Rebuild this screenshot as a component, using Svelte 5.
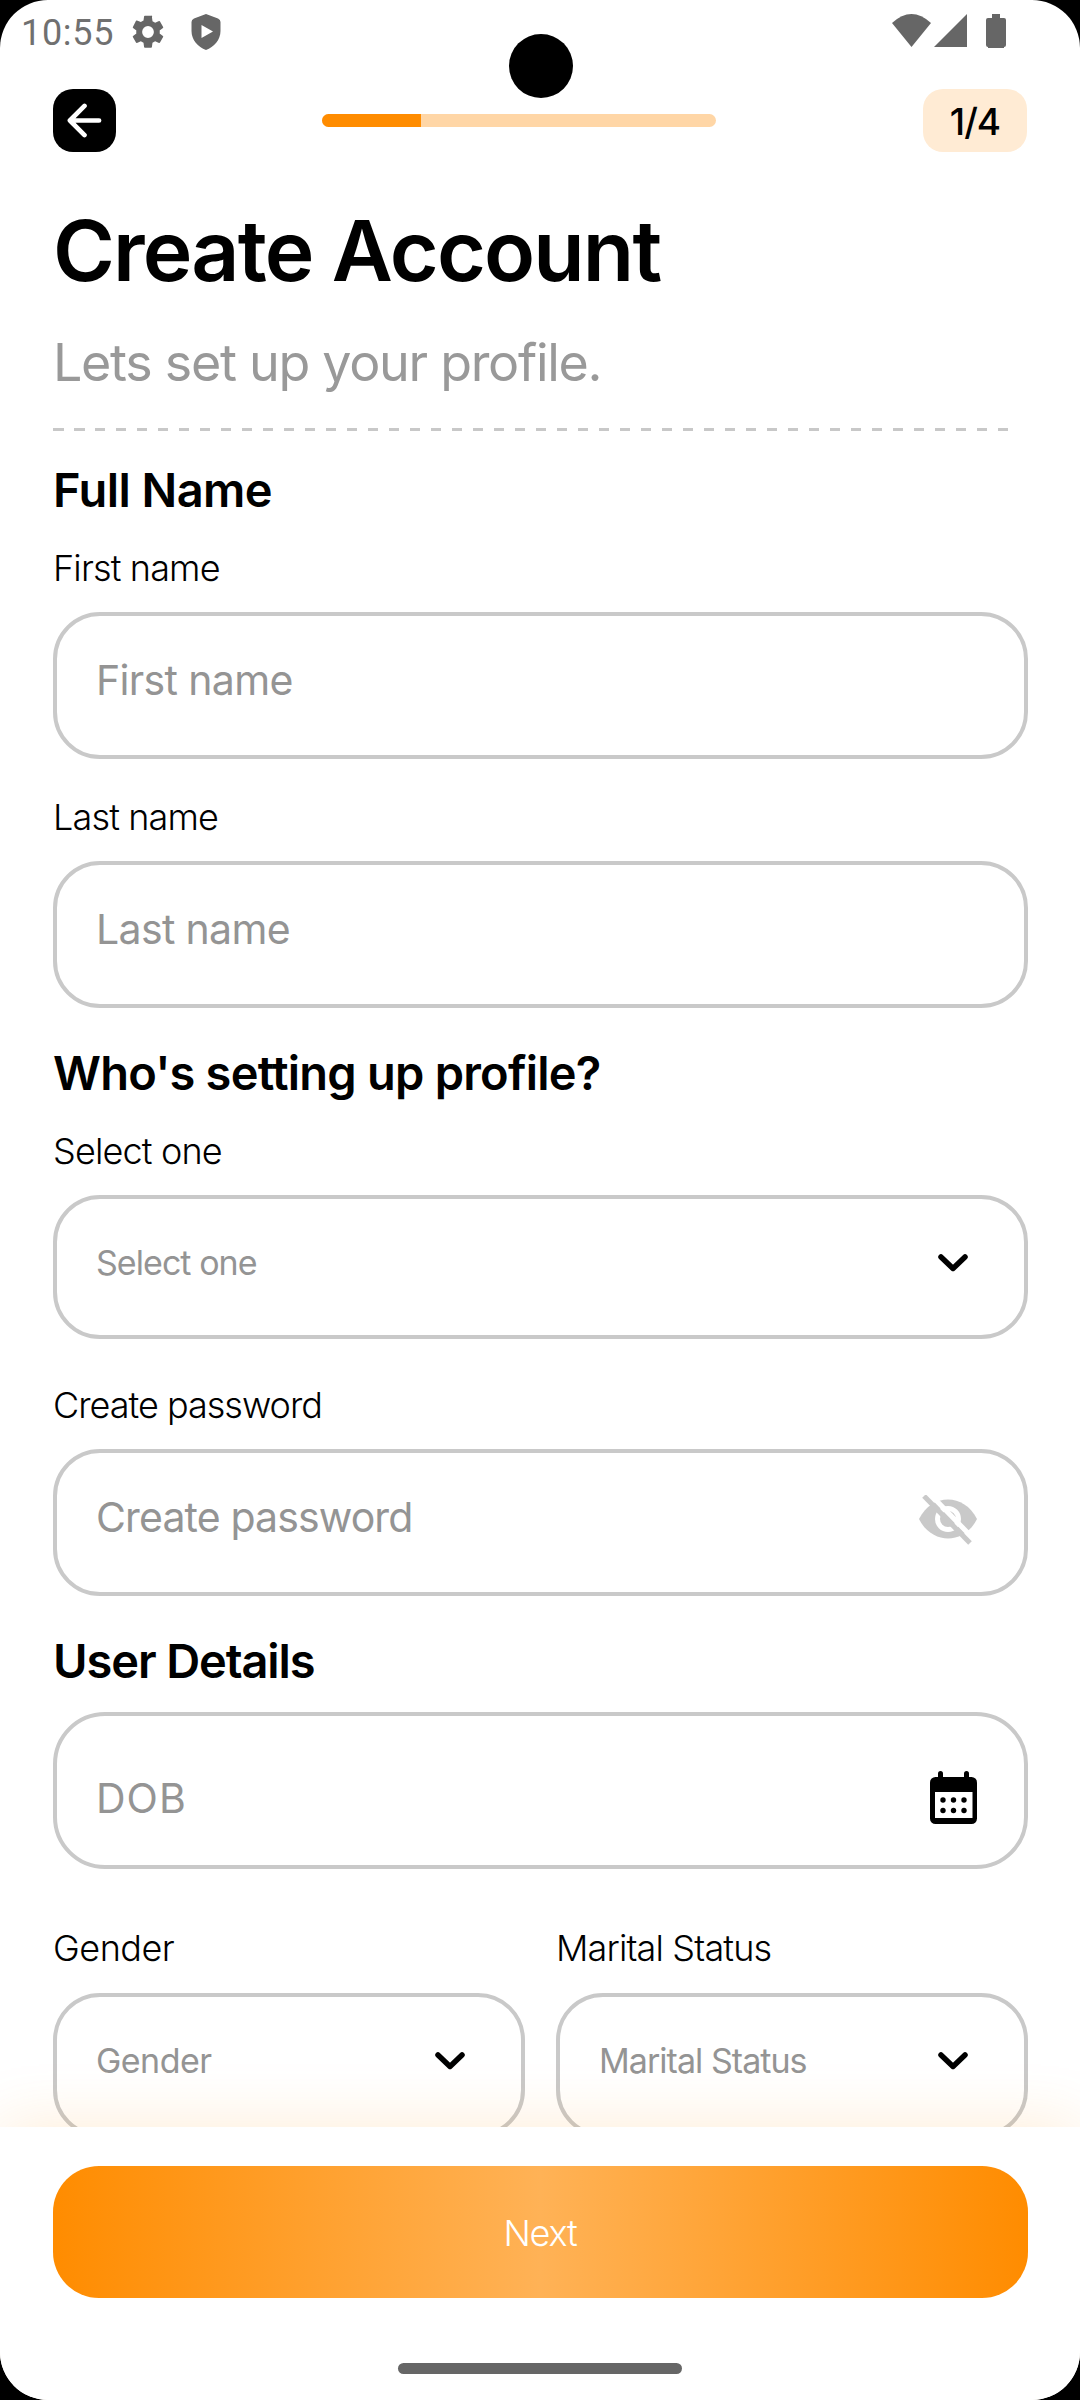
<script>
	const step = 1;
	const totalSteps = 4;
	const progress = (step / totalSteps) * 100;
</script>

{#snippet chevron()}
	<svg class="chevron" viewBox="0 0 30 18" aria-hidden="true">
		<path d="M3 3 L15 14.4 L27 3" />
	</svg>
{/snippet}

<div class="screen">
	<div class="status-bar">
		<span class="time">10:55</span>
		<svg class="gear" viewBox="2.2 2 19.6 20" aria-hidden="true">
			<path
				d="M19.14 12.94c.04-.3.06-.61.06-.94 0-.32-.02-.64-.07-.94l2.03-1.58a.49.49 0 0 0 .12-.61l-1.92-3.32a.49.49 0 0 0-.59-.22l-2.39.96c-.5-.38-1.03-.7-1.62-.94l-.36-2.54A.48.48 0 0 0 13.92 2h-3.84a.48.48 0 0 0-.47.41l-.36 2.54c-.59.24-1.13.57-1.62.94l-2.39-.96a.48.48 0 0 0-.59.22L2.74 8.87a.48.48 0 0 0 .12.61l2.03 1.58c-.05.3-.09.63-.09.94s.02.64.07.94l-2.03 1.58a.49.49 0 0 0-.12.61l1.92 3.32c.12.22.37.29.59.22l2.39-.96c.5.38 1.03.7 1.62.94l.36 2.54c.05.24.24.41.48.41h3.84c.24 0 .44-.17.47-.41l.36-2.54c.59-.24 1.13-.56 1.62-.94l2.39.96c.22.08.47 0 .59-.22l1.92-3.32a.48.48 0 0 0-.12-.61l-2.01-1.58zM12 15.6A3.6 3.6 0 1 1 12 8.4a3.6 3.6 0 0 1 0 7.2z"
			/>
		</svg>
		<svg class="shield" viewBox="0 0 30 36" aria-hidden="true">
			<path
				fill-rule="evenodd"
				d="M15 0 L27 4.5 Q29.5 5.5 29.5 8 V17 C29.5 26 23 33 15 36 C7 33 .5 26 .5 17 V8 Q.5 5.5 3 4.5 Z M10.5 11 V24 L22 17.5 Z"
			/>
		</svg>
		<span class="spacer"></span>
		<svg class="wifi" viewBox="0 0 39 33" aria-hidden="true">
			<path d="M0 9 Q19.5 -9 39 9 L19.5 33 Z" />
		</svg>
		<svg class="signal" viewBox="0 0 33 33" aria-hidden="true">
			<path d="M33 0 V33 H0 Z" />
		</svg>
		<svg class="battery" viewBox="0 0 20 34" aria-hidden="true">
			<path d="M6 0 h8 v4 h4 q2 0 2 2 v25 q0 2 -2 2 v1 h-16 v-1 q-2 0 -2 -2 v-25 q0 -2 2 -2 h4 z" />
		</svg>
	</div>
	<div class="camera"></div>

	<header class="header">
		<button class="back" aria-label="Back">
			<svg viewBox="0 0 36 36" aria-hidden="true">
				<path d="M33 18 H3 M18 3 L3 18 L18 33" />
			</svg>
		</button>
		<div class="progress">
			<div class="progress-fill" style="width: {progress}%"></div>
		</div>
		<div class="step">{step}/{totalSteps}</div>
	</header>

	<main class="content">
		<h1>Create Account</h1>
		<p class="subtitle">Lets set up your profile.</p>
		<div class="divider"></div>

		<h2 class="full-name">Full Name</h2>
		<div class="label first">First name</div>
		<div class="field"><span>First name</span></div>
		<div class="label second">Last name</div>
		<div class="field"><span>Last name</span></div>

		<h2>Who's setting up profile?</h2>
		<div class="label first">Select one</div>
		<button class="field select">
			<span>Select one</span>
			{@render chevron()}
		</button>
		<div class="label third">Create password</div>
		<div class="field password">
			<span>Create password</span>
			<svg class="eye" viewBox="0 0 58 50" aria-hidden="true">
				<path class="lens" d="M0 24 C13 -2 45 -2 58 24 C45 50 13 50 0 24 Z" />
				<circle class="ring" cx="29" cy="24" r="10.5" />
				<path class="gap" d="M10 -2 L60 49.5" />
				<path class="slash" d="M5 1 L51 48" />
			</svg>
		</div>

		<h2 class="details">User Details</h2>
		<div class="field date">
			<span>DOB</span>
			<svg class="calendar" viewBox="0 0 47 53" aria-hidden="true">
				<rect x="8" y="0" width="5" height="12" rx="2.5" />
				<rect x="34" y="0" width="5" height="12" rx="2.5" />
				<rect x="0" y="6" width="47" height="47" rx="5.5" />
				<rect class="page" x="5" y="21" width="37.5" height="26" />
				{#each [29, 39.5] as cy}
					{#each [13, 23.5, 34] as cx}
						<circle {cx} {cy} r="2.7" />
					{/each}
				{/each}
			</svg>
		</div>

		<div class="row">
			<div class="column">
				<div class="label gender">Gender</div>
				<button class="field select gender">
					<span>Gender</span>
					{@render chevron()}
				</button>
			</div>
			<div class="column">
				<div class="label">Marital Status</div>
				<button class="field select">
					<span>Marital Status</span>
					{@render chevron()}
				</button>
			</div>
		</div>
	</main>

	<footer class="footer">
		<button class="next">Next</button>
		<div class="home-bar"></div>
	</footer>
</div>

<style>
	:global(body) {
		margin: 0;
		background: #000;
	}

	.screen {
		position: relative;
		display: flex;
		flex-direction: column;
		width: 1080px;
		height: 2400px;
		overflow: hidden;
		border-radius: 48px;
		background: #fff;
		color: #000;
		font-family: Inter, sans-serif;
	}

	button {
		margin: 0;
		border: 0;
		padding: 0;
		background: none;
		color: inherit;
		font: inherit;
	}

	svg {
		display: block;
		flex: none;
	}

	.status-bar {
		display: flex;
		flex: none;
		box-sizing: border-box;
		height: 89px;
		padding: 14px 74px 0 21px;
		fill: #666;
	}

	.time {
		width: 111px;
		color: #707070;
		font: 400 36px/38px Roboto, sans-serif;
		letter-spacing: 0.7px;
	}

	.gear {
		width: 32px;
		height: 34px;
		margin-top: 1px;
	}

	.shield {
		width: 30px;
		height: 36px;
		margin-left: 27px;
	}

	.spacer {
		flex: 1;
	}

	.wifi {
		width: 39px;
		height: 33px;
	}

	.signal {
		width: 33px;
		height: 33px;
		margin-left: 3px;
	}

	.battery {
		width: 20px;
		height: 34px;
		margin-left: 19px;
	}

	.camera {
		position: absolute;
		top: 34px;
		left: 509px;
		width: 64px;
		height: 64px;
		border-radius: 50%;
		background: #000;
	}

	.header {
		display: flex;
		flex: none;
		align-items: center;
		justify-content: space-between;
		height: 63px;
		padding: 0 53px 0 52.5px;
	}

	.back {
		display: grid;
		place-items: center;
		width: 63px;
		height: 63px;
		border-radius: 20px;
		background: #000;
	}

	.back svg {
		width: 35px;
		height: 35px;
		fill: none;
		stroke: #fff;
		stroke-width: 4.8;
		stroke-linecap: round;
		stroke-linejoin: round;
	}

	.progress {
		width: 394px;
		height: 13px;
		overflow: hidden;
		border-radius: 7px;
		background: #ffd6a6;
	}

	.progress-fill {
		height: 100%;
		background: #ff8c00;
	}

	.step {
		width: 104px;
		height: 63px;
		border-radius: 20px;
		background: #ffebd4;
		font-size: 37px;
		font-weight: 500;
		letter-spacing: -1px;
		line-height: 65px;
		text-align: center;
	}

	.content {
		flex: 1;
		min-height: 0;
		padding: 49px 52px 0 53px;
		overflow: hidden;
	}

	h1 {
		margin: 0;
		font-size: 84px;
		font-weight: 600;
		letter-spacing: -1.85px;
		line-height: 100px;
	}

	.subtitle {
		margin: 32px 0 35px;
		color: #999;
		font-size: 52px;
		letter-spacing: -1.3px;
		line-height: 60px;
	}

	.divider {
		width: 956px;
		height: 3px;
		background: repeating-linear-gradient(90deg, #c8c8c8 0 10.5px, transparent 10.5px 21px);
	}

	h2 {
		margin: 35px 0 0;
		font-size: 47px;
		font-weight: 600;
		letter-spacing: -0.77px;
		line-height: 60px;
	}

	h2.full-name {
		margin-top: 29px;
		letter-spacing: -0.55px;
	}

	h2.details {
		letter-spacing: -1.1px;
	}

	.label {
		margin-bottom: 19px;
		font-size: 36px;
		font-weight: 300;
		letter-spacing: -0.85px;
		line-height: 50px;
	}

	.label.first {
		margin-top: 23px;
	}

	.label.second {
		margin-top: 33px;
	}

	.label.third {
		margin-top: 41px;
		letter-spacing: -1px;
	}

	.label.gender {
		letter-spacing: -0.5px;
	}

	.field {
		display: flex;
		align-items: center;
		justify-content: space-between;
		box-sizing: border-box;
		width: 100%;
		height: 147px;
		border: 4px solid #c9c9c9;
		border-radius: 47px;
		padding: 0 47px 12px 39px;
		color: #949494;
		font-size: 41px;
		letter-spacing: -0.65px;
		text-align: left;
	}

	.field.select {
		height: 144px;
		padding: 0 56px 9px 39px;
		font-size: 34px;
		letter-spacing: -0.95px;
	}

	.field.gender {
		letter-spacing: -0.55px;
	}

	.field.password {
		letter-spacing: -0.87px;
	}

	.field.date {
		height: 157px;
		margin-top: 21px;
		border-radius: 52px;
		padding: 15px 47px 0 39px;
		letter-spacing: 1px;
	}

	.chevron {
		width: 30px;
		height: 18px;
		fill: none;
		stroke: #000;
		stroke-width: 5.5;
		stroke-linecap: round;
		stroke-linejoin: round;
	}

	.eye {
		width: 58px;
		height: 50px;
		margin-top: 7px;
	}

	.lens {
		fill: #c9c9c9;
	}

	.ring {
		fill: none;
		stroke: #fff;
		stroke-width: 5;
	}

	.gap {
		stroke: #fff;
		stroke-width: 5;
	}

	.slash {
		stroke: #c9c9c9;
		stroke-width: 5;
	}

	.calendar {
		width: 47px;
		height: 53px;
		margin-top: -2px;
	}

	.page {
		fill: #fff;
	}

	.row {
		display: flex;
		gap: 31px;
		margin-top: 54px;
	}

	.column {
		flex: 1;
	}

	.column .label {
		margin-bottom: 20px;
	}

	.footer {
		position: relative;
		display: flex;
		flex: none;
		flex-direction: column;
		align-items: center;
		box-sizing: border-box;
		height: 273px;
		padding: 39px 52.5px 0;
		background: #fff;
		box-shadow: 0 0 60px rgba(255, 148, 20, 0.18);
	}

	.next {
		width: 100%;
		height: 132px;
		border-radius: 46px;
		padding-top: 2px;
		background: linear-gradient(90deg, #ff8c00, #ffb256 50%, #ff8c00);
		color: #fff;
		font-size: 36px;
		font-weight: 300;
		letter-spacing: -1.2px;
	}

	.home-bar {
		width: 284px;
		height: 11px;
		margin-top: 65px;
		border-radius: 6px;
		background: #666;
	}
</style>
